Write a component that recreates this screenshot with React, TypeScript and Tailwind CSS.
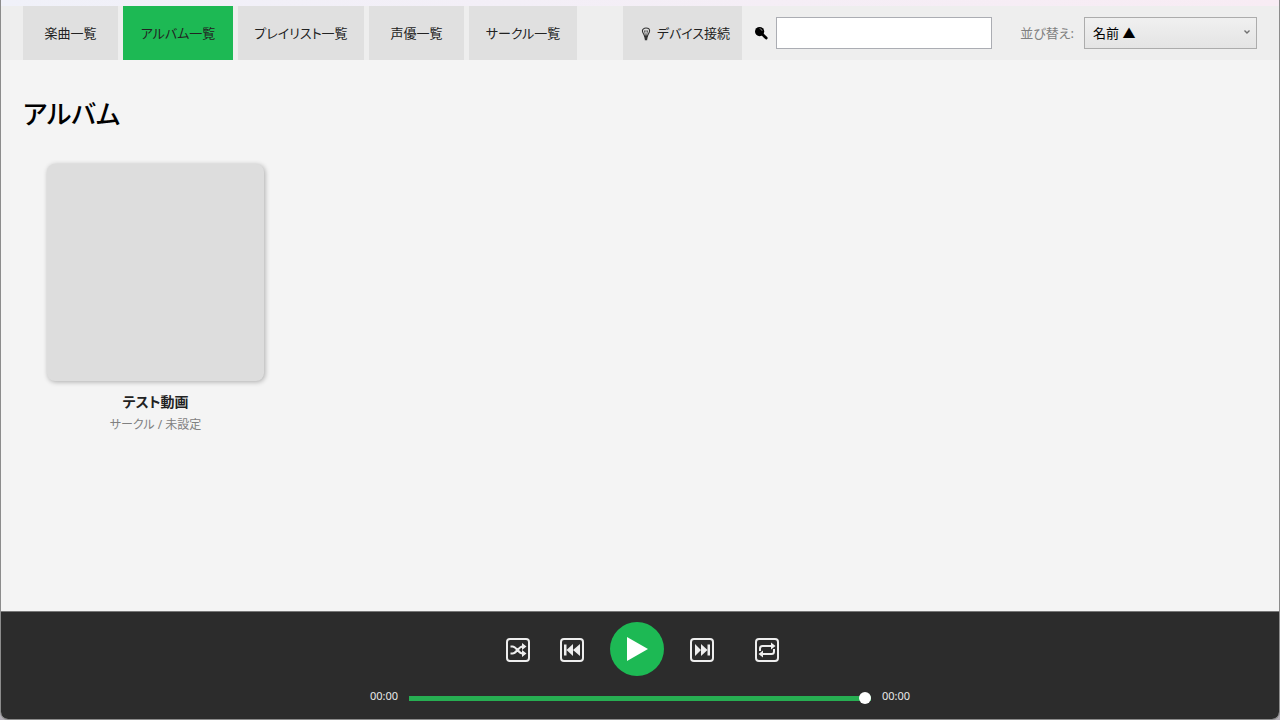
import { useState } from 'react';

type View = 'songs' | 'albums' | 'playlists' | 'voices' | 'circles';

const TABS: { id: View; label: string; width: string }[] = [
  { id: 'songs', label: '楽曲一覧', width: 'w-[95px]' },
  { id: 'albums', label: 'アルバム一覧', width: 'w-[110px]' },
  { id: 'playlists', label: 'プレイリスト一覧', width: 'w-[126px]' },
  { id: 'voices', label: '声優一覧', width: 'w-[95px]' },
  { id: 'circles', label: 'サークル一覧', width: 'w-[108px]' },
];

const ALBUMS = [{ id: 1, title: 'テスト動画', circle: 'サークル', voice: '未設定' }];

function BulbIcon() {
  return (
    <svg viewBox="0 0 10 14" className="h-3.5 w-2.5" fill="none" stroke="#333" strokeWidth="1.1">
      <path d="M3.6 9.4C3.4 7.2 1.4 6 1.4 3.8a3.6 2.8 0 0 1 7.2 0c0 2.2-2 3.4-2.2 5.6z" />
      <path d="M3.4 3.6 4.6 9M6.6 3.6 5.4 9M3.4 4h3.2" strokeWidth="0.7" />
      <path d="M3.4 10.8h3.2M3.8 12.4h2.4" strokeWidth="1.6" />
    </svg>
  );
}

function SearchIcon() {
  return (
    <svg viewBox="0 0 14 14" className="h-3.5 w-3.5">
      <path d="m8 8 4.2 4" stroke="#000" strokeWidth="2.8" strokeLinecap="round" />
      <circle cx="5.6" cy="5.6" r="4.6" fill="#000" />
      <path d="M5.6 2.6a3 3 0 0 1 2.6 2.4" stroke="#999" strokeWidth="0.8" fill="none" />
    </svg>
  );
}

function KeyIcon({ children }: { children: React.ReactNode }) {
  return (
    <svg viewBox="0 0 24 24" className="h-6 w-6" fill="none" stroke="#eee" strokeWidth="2">
      <rect x="1" y="1" width="22" height="22" rx="3" />
      {children}
    </svg>
  );
}

export default function App() {
  const [view, setView] = useState<View>('albums');
  const [query, setQuery] = useState('');
  const [sort, setSort] = useState('name-asc');
  const [position, setPosition] = useState(100);

  return (
    <div className="h-screen bg-[#b4b0b8] font-[family-name:'Noto_Sans','Noto_Sans_CJK_JP',sans-serif] [font-feature-settings:'palt']">
      <div className="flex h-full flex-col overflow-hidden rounded-b-lg border-x border-b border-[#8c8c8c] bg-[#f4f4f4]">
        <div className="h-1.5 shrink-0 bg-gradient-to-r from-[#f0f1f9] to-[#f8ecf4]" />

        {/* Toolbar */}
        <header className="flex shrink-0 items-center bg-[#eee] px-[22px] text-[13px] text-[#222]">
          <nav className="flex gap-[5px]">
            {TABS.map(tab => (
              <button
                key={tab.id}
                type="button"
                onClick={() => setView(tab.id)}
                className={`h-[54px] pt-0.5 whitespace-nowrap ${tab.width} ${view === tab.id ? 'bg-[#1db954]' : 'bg-[#e0e0e0]'}`}
              >
                {tab.label}
              </button>
            ))}
          </nav>
          <button
            type="button"
            className="ml-[46px] flex h-[54px] w-[119px] items-center justify-center gap-1.5 bg-[#e0e0e0] pt-0.5 pl-1.5 whitespace-nowrap"
          >
            <BulbIcon />
            デバイス接続
          </button>
          <label htmlFor="search" aria-label="検索" className="mr-2 ml-3">
            <SearchIcon />
          </label>
          <input
            id="search"
            type="text"
            value={query}
            onChange={e => setQuery(e.target.value)}
            className="h-8 w-[216px] border border-[#abadb3] bg-white px-2 outline-none"
          />
          <label htmlFor="sort" className="mr-2.5 ml-auto pt-0.5 text-[#808080]">
            並び替え:
          </label>
          <div className="relative">
            <select
              id="sort"
              value={sort}
              onChange={e => setSort(e.target.value)}
              className="h-8 w-[173px] appearance-none border border-[#acacac] bg-gradient-to-b from-[#f0f0f0] to-[#e4e4e4] pt-0.5 pl-2 text-black"
            >
              <option value="name-asc">名前 ▲</option>
              <option value="name-desc">名前 ▼</option>
            </select>
            <svg
              viewBox="0 0 8 6"
              className="pointer-events-none absolute top-3 right-1.5 h-1.5 w-2"
              fill="none"
              stroke="#707070"
              strokeWidth="1.4"
            >
              <path d="m1.5 1.5 2.5 2.5 2.5-2.5" />
            </svg>
          </div>
        </header>

        {/* Albums */}
        <main className="flex-1 overflow-auto px-[22px] pt-[34px]">
          <h1 className="text-[26px] leading-10 font-medium text-black">アルバム</h1>
          <ul className="mt-[30px] flex flex-wrap gap-6 px-6">
            {ALBUMS.map(album => (
              <li key={album.id} className="w-[217px] text-center">
                <div className="aspect-square rounded-lg bg-[#ddd] shadow-[1px_1px_5px_rgba(0,0,0,0.3)]" />
                <p className="mt-2 text-[14px] leading-[26px] font-bold text-[#222]">{album.title}</p>
                <p className="text-[12px] leading-5 text-[#808080]">
                  {album.circle} / {album.voice}
                </p>
              </li>
            ))}
          </ul>
        </main>

        {/* Player */}
        <footer className="h-[108px] shrink-0 border-t border-[#777] bg-[#2c2c2c] pt-2.5">
          <div className="flex items-center justify-center pr-0.5 pl-1.5">
            <button type="button" aria-label="シャッフル" className="pt-0.5">
              <KeyIcon>
                <path d="M4.5 8.5h2c4 0 6 7 10 7h1M4.5 15.5h2c4 0 6-7 10-7h1" />
                <path d="m16 5 4.5 3.5L16 12zM16 12l4.5 3.5L16 19z" fill="#eee" stroke="none" />
              </KeyIcon>
            </button>
            <button type="button" aria-label="前へ" className="ml-[30px] pt-0.5">
              <KeyIcon>
                <path d="M4 6.5h2.5v11H4zM13 6v12l-6.500-6zM20 6v12l-7-6z" fill="#eee" stroke="none" />
              </KeyIcon>
            </button>
            <button
              type="button"
              aria-label="再生"
              className="mx-[26px] flex h-[54px] w-[54px] items-center justify-center rounded-full bg-[#1db954]"
            >
              <svg viewBox="0 0 22 24" className="h-6 w-[22px]" fill="#fff">
                <path d="M1 0v24l21-12z" />
              </svg>
            </button>
            <button type="button" aria-label="次へ" className="pt-0.5">
              <KeyIcon>
                <path d="M20 6.5h-2.5v11H20zM11 6v12l6.5-6zM5 6v12l6-6z" fill="#eee" stroke="none" />
              </KeyIcon>
            </button>
            <button type="button" aria-label="リピート" className="ml-[41px] pt-0.5">
              <KeyIcon>
                <path d="M5 13v-2.5q0-2.5 2.5-2.5H17M19 11v2.5q0 2.5-2.5 2.5H7" />
                <path d="m16 4.5 4.5 3.5-4.5 3.5zM8 12.5 3.5 16 8 19.5z" fill="#eee" stroke="none" />
              </KeyIcon>
            </button>
          </div>
          <div className="mx-auto mt-2.5 flex w-[540px] items-center gap-[11px] text-[11px] leading-5 text-[#e8e8e8]">
            <span>00:00</span>
            <input
              type="range"
              aria-label="再生位置"
              min={0}
              max={100}
              value={position}
              onChange={e => setPosition(Number(e.target.value))}
              className="mt-1 h-[5px] min-w-0 flex-1 appearance-none bg-[#27ae52] [&::-webkit-slider-thumb]:h-3 [&::-webkit-slider-thumb]:w-3 [&::-webkit-slider-thumb]:appearance-none [&::-webkit-slider-thumb]:rounded-full [&::-webkit-slider-thumb]:bg-white"
            />
            <span>00:00</span>
          </div>
        </footer>
      </div>
    </div>
  );
}
